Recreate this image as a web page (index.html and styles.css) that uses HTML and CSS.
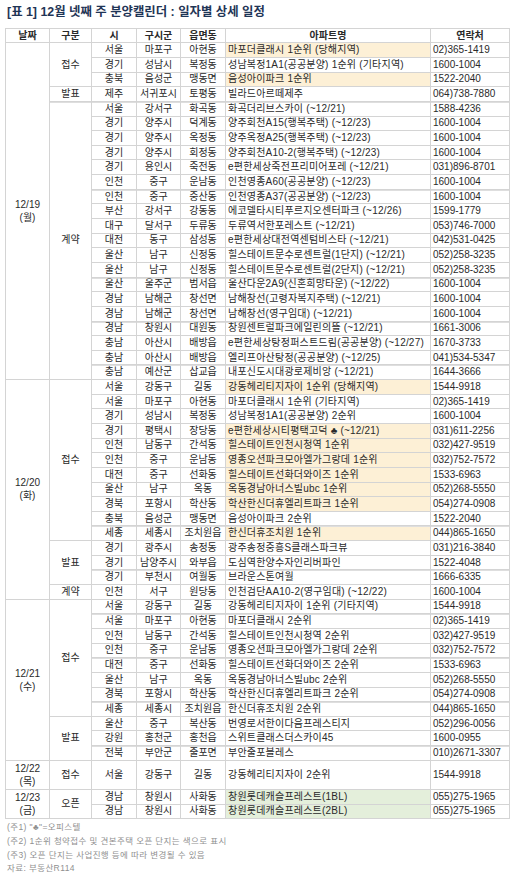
FILE: index.html
```html
<!DOCTYPE html>
<html lang="ko">
<head>
<meta charset="utf-8">
<title>분양캘린더</title>
<link rel="stylesheet" href="styles.css">
</head>
<body>
<div class="page">
<div class="title">[표 1] 12월 넷째 주 분양캘린더 : 일자별 상세 일정</div>
<table class="cal">
<colgroup><col class="w-date"><col class="w-type"><col class="w-si"><col class="w-gu"><col class="w-dong"><col class="w-apt"><col class="w-tel"></colgroup>
<thead>
<tr><th>날짜</th><th>구분</th><th>시</th><th>구시군</th><th>읍면동</th><th>아파트명</th><th>연락처</th></tr>
</thead>
<tbody>
<tr><td rowspan="23" class="date">12/19<br>(월)</td><td rowspan="3">접수</td><td>서울</td><td>마포구</td><td>아현동</td><td class="apt hl">마포더클래시 1순위 (당해지역)</td><td class="tel">02)365-1419</td></tr>
<tr><td>경기</td><td>성남시</td><td>복정동</td><td class="apt">성남복정1A1(공공분양) 1순위 (기타지역)</td><td class="tel">1600-1004</td></tr>
<tr><td>충북</td><td>음성군</td><td>맹동면</td><td class="apt hl">음성아이파크 1순위</td><td class="tel">1522-2040</td></tr>
<tr><td>발표</td><td>제주</td><td>서귀포시</td><td>토평동</td><td class="apt">빌라드아르떼제주</td><td class="tel">064)738-7880</td></tr>
<tr class="sep"><td rowspan="19">계약</td><td>서울</td><td>강서구</td><td>화곡동</td><td class="apt">화곡더리브스카이 (~12/21)</td><td class="tel">1588-4236</td></tr>
<tr><td>경기</td><td>양주시</td><td>덕계동</td><td class="apt">양주회천A15(행복주택) (~12/23)</td><td class="tel">1600-1004</td></tr>
<tr><td>경기</td><td>양주시</td><td>옥정동</td><td class="apt">양주옥정A25(행복주택) (~12/23)</td><td class="tel">1600-1004</td></tr>
<tr><td>경기</td><td>양주시</td><td>회정동</td><td class="apt">양주회천A10-2(행복주택) (~12/23)</td><td class="tel">1600-1004</td></tr>
<tr><td>경기</td><td>용인시</td><td>죽전동</td><td class="apt">e편한세상죽전프리미어포레 (~12/21)</td><td class="tel">031)896-8701</td></tr>
<tr><td>인천</td><td>중구</td><td>운남동</td><td class="apt">인천영종A60(공공분양) (~12/23)</td><td class="tel">1600-1004</td></tr>
<tr class="sep"><td>인천</td><td>중구</td><td>중산동</td><td class="apt">인천영종A37(공공분양) (~12/23)</td><td class="tel">1600-1004</td></tr>
<tr><td>부산</td><td>강서구</td><td>강동동</td><td class="apt">에코델타시티푸르지오센터파크 (~12/26)</td><td class="tel">1599-1779</td></tr>
<tr><td>대구</td><td>달서구</td><td>두류동</td><td class="apt">두류역서한포레스트 (~12/21)</td><td class="tel">053)746-7000</td></tr>
<tr><td>대전</td><td>동구</td><td>삼성동</td><td class="apt">e편한세상대전역센텀비스타 (~12/21)</td><td class="tel">042)531-0425</td></tr>
<tr><td>울산</td><td>남구</td><td>신정동</td><td class="apt">힐스테이트문수로센트럴(1단지) (~12/21)</td><td class="tel">052)258-3235</td></tr>
<tr><td>울산</td><td>남구</td><td>신정동</td><td class="apt">힐스테이트문수로센트럴(2단지) (~12/21)</td><td class="tel">052)258-3235</td></tr>
<tr class="sep"><td>울산</td><td>울주군</td><td>범서읍</td><td class="apt">울산다운2A9(신혼희망타운) (~12/22)</td><td class="tel">1600-1004</td></tr>
<tr><td>경남</td><td>남해군</td><td>창선면</td><td class="apt">남해창선(고령자복지주택) (~12/21)</td><td class="tel">1600-1004</td></tr>
<tr><td>경남</td><td>남해군</td><td>창선면</td><td class="apt">남해창선(영구임대) (~12/21)</td><td class="tel">1600-1004</td></tr>
<tr class="sep"><td>경남</td><td>창원시</td><td>대원동</td><td class="apt">창원센트럴파크에일린의뜰 (~12/21)</td><td class="tel">1661-3006</td></tr>
<tr><td>충남</td><td>아산시</td><td>배방읍</td><td class="apt">e편한세상탕정퍼스트드림(공공분양) (~12/27)</td><td class="tel">1670-3733</td></tr>
<tr><td>충남</td><td>아산시</td><td>배방읍</td><td class="apt">엘리프아산탕정(공공분양) (~12/25)</td><td class="tel">041)534-5347</td></tr>
<tr class="sep"><td>충남</td><td>예산군</td><td>삽교읍</td><td class="apt">내포신도시대광로제비앙 (~12/21)</td><td class="tel">1644-3666</td></tr>

<tr><td rowspan="15" class="date">12/20<br>(화)</td><td rowspan="11">접수</td><td>서울</td><td>강동구</td><td>길동</td><td class="apt hl">강동헤리티지자이 1순위 (당해지역)</td><td class="tel">1544-9918</td></tr>
<tr><td>서울</td><td>마포구</td><td>아현동</td><td class="apt">마포더클래시 1순위 (기타지역)</td><td class="tel">02)365-1419</td></tr>
<tr><td>경기</td><td>성남시</td><td>복정동</td><td class="apt">성남복정1A1(공공분양) 2순위</td><td class="tel">1600-1004</td></tr>
<tr><td>경기</td><td>평택시</td><td>장당동</td><td class="apt hl">e편한세상시티평택고덕 ♣ (~12/21)</td><td class="tel">031)611-2256</td></tr>
<tr><td>인천</td><td>남동구</td><td>간석동</td><td class="apt hl">힐스테이트인천시청역 1순위</td><td class="tel">032)427-9519</td></tr>
<tr><td>인천</td><td>중구</td><td>운남동</td><td class="apt hl">영종오션파크모아엘가그랑데 1순위</td><td class="tel">032)752-7572</td></tr>
<tr><td>대전</td><td>중구</td><td>선화동</td><td class="apt hl">힐스테이트선화더와이즈 1순위</td><td class="tel">1533-6963</td></tr>
<tr><td>울산</td><td>남구</td><td>옥동</td><td class="apt hl">옥동경남아너스빌ubc 1순위</td><td class="tel">052)268-5550</td></tr>
<tr><td>경북</td><td>포항시</td><td>학산동</td><td class="apt hl">학산한신더휴엘리트파크 1순위</td><td class="tel">054)274-0908</td></tr>
<tr><td>충북</td><td>음성군</td><td>맹동면</td><td class="apt">음성아이파크 2순위</td><td class="tel">1522-2040</td></tr>
<tr class="sep"><td>세종</td><td>세종시</td><td>조치원읍</td><td class="apt hl">한신더휴조치원 1순위</td><td class="tel">044)865-1650</td></tr>
<tr><td rowspan="3">발표</td><td>경기</td><td>광주시</td><td>송정동</td><td class="apt">광주송정중흥S클래스파크뷰</td><td class="tel">031)216-3840</td></tr>
<tr><td>경기</td><td>남양주시</td><td>와부읍</td><td class="apt">도심역한양수자인리버파인</td><td class="tel">1522-4048</td></tr>
<tr class="sep"><td>경기</td><td>부천시</td><td>여월동</td><td class="apt">브라운스톤여월</td><td class="tel">1666-6335</td></tr>
<tr><td>계약</td><td>인천</td><td>서구</td><td>원당동</td><td class="apt">인천검단AA10-2(영구임대) (~12/22)</td><td class="tel">1600-1004</td></tr>

<tr><td rowspan="11" class="date">12/21<br>(수)</td><td rowspan="8">접수</td><td>서울</td><td>강동구</td><td>길동</td><td class="apt">강동헤리티지자이 1순위 (기타지역)</td><td class="tel">1544-9918</td></tr>
<tr class="sep"><td>서울</td><td>마포구</td><td>아현동</td><td class="apt">마포더클래시 2순위</td><td class="tel">02)365-1419</td></tr>
<tr><td>인천</td><td>남동구</td><td>간석동</td><td class="apt">힐스테이트인천시청역 2순위</td><td class="tel">032)427-9519</td></tr>
<tr><td>인천</td><td>중구</td><td>운남동</td><td class="apt">영종오션파크모아엘가그랑데 2순위</td><td class="tel">032)752-7572</td></tr>
<tr class="sep"><td>대전</td><td>중구</td><td>선화동</td><td class="apt">힐스테이트선화더와이즈 2순위</td><td class="tel">1533-6963</td></tr>
<tr><td>울산</td><td>남구</td><td>옥동</td><td class="apt">옥동경남아너스빌ubc 2순위</td><td class="tel">052)268-5550</td></tr>
<tr><td>경북</td><td>포항시</td><td>학산동</td><td class="apt">학산한신더휴엘리트파크 2순위</td><td class="tel">054)274-0908</td></tr>
<tr class="sep"><td>세종</td><td>세종시</td><td>조치원읍</td><td class="apt">한신더휴조치원 2순위</td><td class="tel">044)865-1650</td></tr>
<tr><td rowspan="3">발표</td><td>울산</td><td>중구</td><td>복산동</td><td class="apt">번영로서한이다음프레스티지</td><td class="tel">052)296-0056</td></tr>
<tr><td>강원</td><td>홍천군</td><td>홍천읍</td><td class="apt">스위트클래스더스카이45</td><td class="tel">1600-0955</td></tr>
<tr class="sep"><td>전북</td><td>부안군</td><td>줄포면</td><td class="apt">부안줄포블레스</td><td class="tel">010)2671-3307</td></tr>

<tr class="tall"><td class="date">12/22<br>(목)</td><td>접수</td><td>서울</td><td>강동구</td><td>길동</td><td class="apt">강동헤리티지자이 2순위</td><td class="tel">1544-9918</td></tr>

<tr><td rowspan="2" class="date">12/23<br>(금)</td><td rowspan="2">오픈</td><td>경남</td><td>창원시</td><td>사화동</td><td class="apt gr">창원롯데캐슬프레스트(1BL)</td><td class="tel">055)275-1965</td></tr>
<tr><td>경남</td><td>창원시</td><td>사화동</td><td class="apt gr">창원롯데캐슬프레스트(2BL)</td><td class="tel">055)275-1965</td></tr>
</tbody>
</table>
<div class="notes">
<p>(주1) "♣"=오피스텔</p>
<p>(주2) 1순위 청약접수 및 견본주택 오픈 단지는 색으로 표시</p>
<p>(주3) 오픈 단지는 사업진행 등에 따라 변경될 수 있음</p>
<p>자료: 부동산R114</p>
</div>
</div>
</body>
</html>
```

FILE: styles.css
```css
html, body {
  margin: 0;
  padding: 0;
  background: #ffffff;
}
body {
  font-family: "Liberation Sans", "Noto Sans CJK KR", sans-serif;
  color: #2a2a2a;
}
.page {
  padding: 5px 3px 0 5px;
}
.title {
  font-family: "Liberation Sans", "Noto Sans CJK KR", sans-serif;
  font-size: 12.4px;
  font-weight: bold;
  color: #1f3556;
  line-height: 14px;
  height: 14px;
  margin-left: 2px;
}
.cal {
  margin-top: 8.7px;
  border-collapse: collapse;
  table-layout: fixed;
  width: 504px;
  font-size: 10px;
}
.w-date { width: 44px; }
.w-type { width: 42px; }
.w-si { width: 45px; }
.w-gu { width: 44px; }
.w-dong { width: 45px; }
.w-apt { width: 205px; }
.w-tel { width: 79px; }
.cal th,
.cal td {
  border: 1px solid #d4d4d4;
  padding: 0;
  height: 13.65px;
  line-height: 12px;
  text-align: center;
  vertical-align: middle;
  white-space: nowrap;
  overflow: hidden;
}
.cal th {
  font-weight: bold;
}
.cal td.apt,
.cal td.tel {
  text-align: left;
  padding-left: 2px;
}
.cal td.apt {
  letter-spacing: 0.2px;
}
.cal td.hl {
  background: #fdf0d6;
}
.cal td.gr {
  background: #e4efdb;
}
.cal tr.sep td {
  box-shadow: inset 0 1px 0 #dedede;
}
.cal td.date {
  line-height: 13px;
}
.cal tr.tall td {
  height: 28.3px;
}
.notes {
  margin: 2px 0 0 2px;
  font-size: 8.5px;
  letter-spacing: 0.4px;
  color: #8f8f8f;
  line-height: 13.7px;
}
.notes p {
  margin: 0;
}
```
